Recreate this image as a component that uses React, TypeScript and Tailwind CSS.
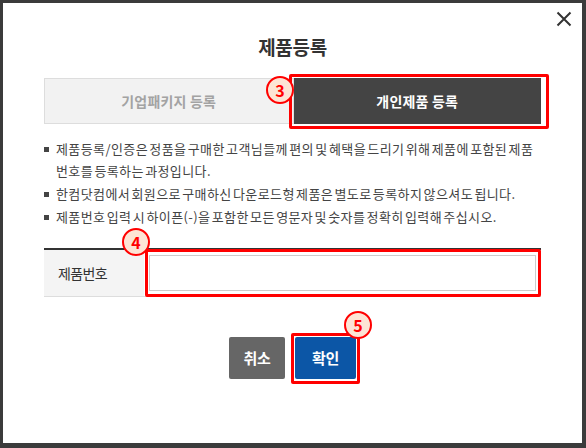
import React from "react";

const notes = [
  "제품등록/인증은 정품을 구매한 고객님들께 편의 및 혜택을 드리기 위해 제품에 포함된 제품 번호를 등록하는 과정입니다.",
  "한컴닷컴에서 회원으로 구매하신 다운로드형 제품은 별도로 등록하지 않으셔도 됩니다.",
  "제품번호 입력 시 하이픈(-)을 포함한 모든 영문자 및 숫자를 정확히 입력해 주십시오.",
];

function StepBadge({ n, className }: { n: number; className: string }) {
  return (
    <div
      className={`absolute flex h-[28px] w-[28px] items-center justify-center rounded-full border-2 border-[#ff0000] bg-[#fde4d5] text-[16px] font-bold leading-none text-[#ff0000] ${className}`}
    >
      {n}
    </div>
  );
}

export default function App() {
  return (
    <div
      className="h-[448px] w-[586px] overflow-hidden bg-[#3b3b3b] pl-[3px] pt-[3px]"
      style={{ fontFamily: '"Noto Sans CJK KR", "Noto Sans", sans-serif' }}
    >
      <div className="relative h-[440px] w-[579px] bg-white px-[41px]">
        <button className="absolute right-[10px] top-[8px] flex h-[16px] w-[16px] items-center justify-center">
          <svg viewBox="0 0 16 16" className="h-[16px] w-[16px]" fill="none" stroke="#333" strokeWidth="2">
            <path d="M1.5 1.5 L14.5 14.5 M14.5 1.5 L1.5 14.5" />
          </svg>
        </button>

        <h2 className="pt-[30px] text-center text-[19px] font-bold leading-[28px] tracking-[-0.3px] text-[#333]">
          제품등록
        </h2>

        <div className="mt-[17px] flex h-[46px]">
          <div className="flex flex-1 items-center justify-center border border-[#dddddd] bg-[#f2f2f2] text-[14px] font-bold tracking-[0.2px] text-[#a3a3a3]">
            기업패키지 등록
          </div>
          <div className="flex flex-1 items-center justify-center bg-[#444444] text-[14px] font-bold tracking-[0.2px] text-white">
            개인제품 등록
          </div>
        </div>

        <ul className="mt-[14px] text-[13px] leading-[22px] tracking-[0.4px] text-[#444] [word-spacing:-2px]">
          {notes.map((t, i) => (
            <li key={i} className={`flex ${i > 0 ? "mt-[1px]" : ""}`}>
              <span className="mr-[7px] mt-[9px] h-[5px] w-[5px] shrink-0 bg-[#444]" />
              <span>{t}</span>
            </li>
          ))}
        </ul>

        <div className="mt-[20px] flex h-[49px] border-b border-t-2 border-b-[#dddddd] border-t-[#333]">
          <div className="flex w-[100px] items-center bg-[#f4f4f4] pl-[14px] text-[14px] tracking-[-0.6px] text-[#333]">
            제품번호
          </div>
          <div className="flex-1 p-[5px]">
            <input className="h-full w-full border border-[#cccccc] px-2 text-[14px] outline-none" />
          </div>
        </div>

        <div className="mt-[40px] flex justify-center gap-[10px]">
          <button className="h-[42px] w-[56px] rounded-[2px] bg-[#666666] text-[15px] font-bold tracking-[-0.3px] text-white">
            취소
          </button>
          <button className="h-[42px] w-[61px] rounded-[2px] bg-[#0c56a6] text-[15px] font-bold tracking-[-0.3px] text-white">
            확인
          </button>
        </div>

        {/* step highlights */}
        <div className="absolute left-[286px] top-[71px] h-[55px] w-[260px] rounded-[2px] border-[3px] border-[#ff0000]" />
        <div className="absolute left-[142px] top-[246px] h-[48px] w-[396px] rounded-[2px] border-[3px] border-[#ff0000]" />
        <div className="absolute left-[288px] top-[330px] h-[51px] w-[69px] rounded-[2px] border-[3px] border-[#ff0000]" />

        <StepBadge n={3} className="left-[263px] top-[73px]" />
        <StepBadge n={4} className="left-[119px] top-[225px]" />
        <StepBadge n={5} className="left-[341px] top-[308px]" />
      </div>
    </div>
  );
}
